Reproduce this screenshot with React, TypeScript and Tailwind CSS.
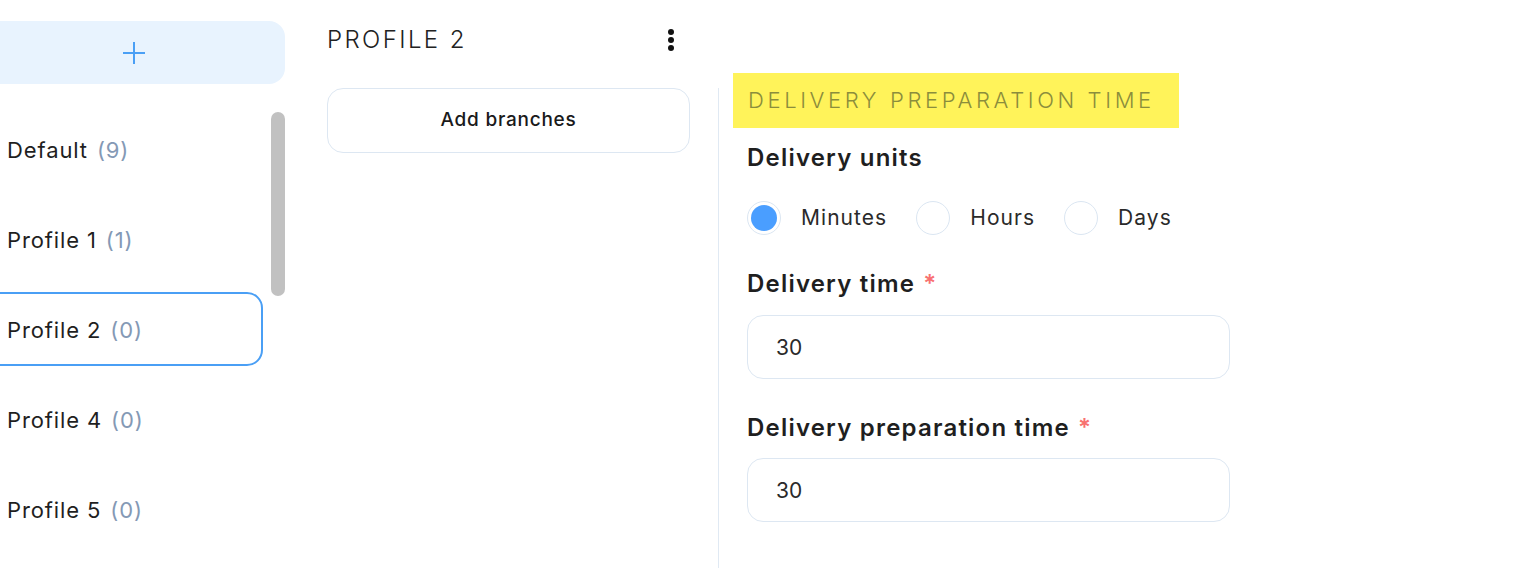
import { useState } from "react";

const profiles = [
  { id: "default", name: "Default", count: 9 },
  { id: "p1", name: "Profile 1", count: 1 },
  { id: "p2", name: "Profile 2", count: 0 },
  { id: "p4", name: "Profile 4", count: 0 },
  { id: "p5", name: "Profile 5", count: 0 },
];

const units = ["Minutes", "Hours", "Days"];

const PlusIcon = () => (
  <svg width="24" height="24" viewBox="0 0 24 24" fill="none" stroke="#4a9ff5" strokeWidth="2">
    <path d="M12 1v22M1 12h22" />
  </svg>
);

const Kebab = () => (
  <div className="flex flex-col items-center gap-[2px]">
    <span className="w-[6px] h-[6px] rounded-full bg-[#111]" />
    <span className="w-[6px] h-[6px] rounded-full bg-[#111]" />
    <span className="w-[6px] h-[6px] rounded-full bg-[#111]" />
  </div>
);

export default function App() {
  const [selected, setSelected] = useState("p2");
  const [unit, setUnit] = useState("Minutes");

  return (
    <div className="w-[1533px] h-[568px] bg-white flex overflow-hidden text-[#1f1f1f] font-['Inter',sans-serif]">
      {/* profile list */}
      <div className="-ml-[17px] w-[302px] shrink-0 pt-[21px]">
        <button className="w-full h-[63px] rounded-[16px] bg-[#e8f3fe] flex items-center justify-center">
          <PlusIcon />
        </button>
        <div className="mt-[28px] flex gap-[8px]">
          <div className="w-[280px] flex flex-col gap-[16px]">
            {profiles.map(p => (
              <div
                key={p.id}
                onClick={() => setSelected(p.id)}
                className={
                  "h-[74px] rounded-[16px] flex items-center pl-[22px] pt-[2px] text-[22px] tracking-[0.04em] " +
                  (selected === p.id ? "border-2 border-[#4a9ff5]" : "border-2 border-transparent")
                }
              >
                <span>{p.name}</span>
                <span className="ml-[9px] text-[#8499b5]">({p.count})</span>
              </div>
            ))}
          </div>
          <div className="w-[14px] h-[184px] rounded-full bg-[#c1c1c1]" />
        </div>
      </div>

      {/* branches */}
      <div className="ml-[42px] w-[363px] shrink-0 pt-[24px]">
        <div className="h-[32px] flex items-center justify-between pr-[16px]">
          <h2 className="text-[24px] font-light tracking-[0.1em] text-[#222]">PROFILE 2</h2>
          <Kebab />
        </div>
        <button className="mt-[32px] w-full h-[65px] rounded-[16px] border border-[#dde7f2] text-[19px] font-medium tracking-[0.04em] text-[#1a1a1a]">
          Add branches
        </button>
      </div>

      <div className="ml-[28px] mt-[88px] w-px bg-[#e0e9f3] shrink-0" />

      {/* delivery settings */}
      <div className="pl-[14px] pt-[73px]">
        <div className="w-[446px] h-[55px] bg-[#fff35a] flex items-center px-[15px]">
          <h3 className="text-[22px] font-light tracking-[0.165em] text-[#8b8d3c]">DELIVERY PREPARATION TIME</h3>
        </div>
        <div className="pl-[14px]">
          <div className="mt-[15px] h-[30px] flex items-center text-[24px] font-semibold tracking-[0.05em]">Delivery units</div>
          <div className="mt-[28px] flex items-center gap-[29px]">
            {units.map(u => (
              <label key={u} className="flex items-center gap-[20px] cursor-pointer" onClick={() => setUnit(u)}>
                <span className="w-[34px] h-[34px] rounded-full border border-[#dbe6f2] flex items-center justify-center">
                  {unit === u && <span className="w-[26px] h-[26px] rounded-full bg-[#4a9eff]" />}
                </span>
                <span className="text-[21px] tracking-[0.05em] text-[#2a2a2a]">{u}</span>
              </label>
            ))}
          </div>
          <div className="mt-[34px] h-[30px] flex items-center text-[24px] font-semibold tracking-[0.05em]">
            Delivery time <span className="ml-[8px] text-[#f87171]">*</span>
          </div>
          <input
            defaultValue="30"
            className="mt-[16px] w-[483px] h-[64px] rounded-[16px] border border-[#dde7f2] px-[28px] text-[21px] text-[#2a2a2a] outline-none block"
          />
          <div className="mt-[34px] h-[30px] flex items-center text-[24px] font-semibold tracking-[0.05em]">
            Delivery preparation time <span className="ml-[8px] text-[#f87171]">*</span>
          </div>
          <input
            defaultValue="30"
            className="mt-[15px] w-[483px] h-[64px] rounded-[16px] border border-[#dde7f2] px-[28px] text-[21px] text-[#2a2a2a] outline-none block"
          />
        </div>
      </div>
    </div>
  );
}
